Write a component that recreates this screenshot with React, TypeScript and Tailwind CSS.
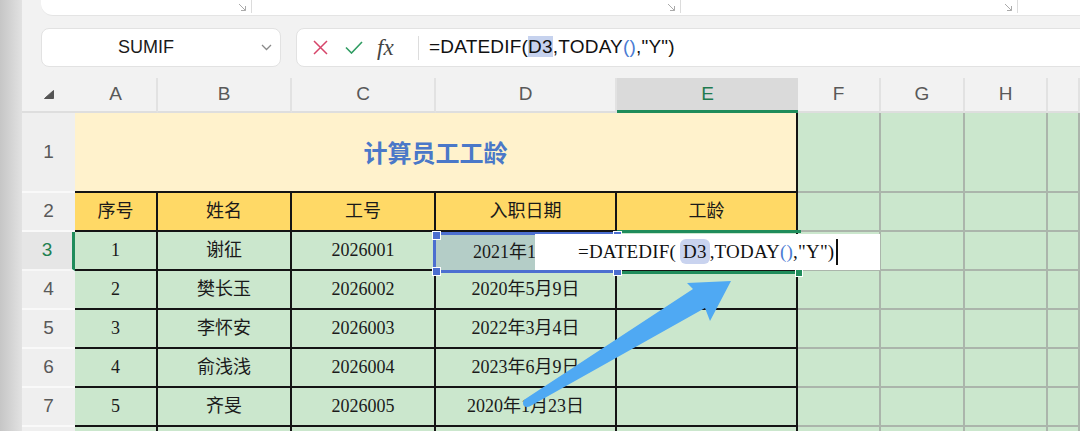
import React from "react";

const COLS =
  "grid grid-cols-[53px_83px_134px_144px_181px_181px_83px_84px_83px_1fr]";

const SERIF = "font-['Liberation_Serif','Noto_Sans_CJK_SC',serif]";

function RowHead({ n, active }: { n: string; active?: boolean }) {
  return (
    <div
      className={
        active
          ? "flex items-center justify-center bg-[#e6e6e6] border-b-2 border-[#f7f7f7] border-r-[3px] border-r-[#1f8c5b] text-[#1f8050] text-[19px] font-['Liberation_Sans',sans-serif]"
          : "flex items-center justify-center bg-[#efefef] border-b-2 border-[#f9f9f9] text-[#595959] text-[19px] font-['Liberation_Sans',sans-serif]"
      }
    >
      {n}
    </div>
  );
}

function Cell({ children, gold }: { children?: React.ReactNode; gold?: boolean }) {
  return (
    <div
      className={
        gold
          ? `flex items-center justify-center bg-[#ffd966] border-r-2 border-b-2 border-[#141414] text-[18px] text-[#1a1a1a] ${SERIF}`
          : `flex items-center justify-center bg-[#cbe7cd] border-r-2 border-b-2 border-[#141414] text-[18px] text-[#1a1a1a] ${SERIF}`
      }
    >
      {children}
    </div>
  );
}

function Empty() {
  return <div className="bg-[#cbe7cd] border-r-2 border-b-2 border-[#abb5ab]" />;
}

function ColHead({ l, active }: { l: string; active?: boolean }) {
  return (
    <div
      className={
        active
          ? "flex items-center justify-center bg-[#dadada] border-b-[3px] border-[#1f8c5b] text-[#1f7a4f] text-[19px] font-['Liberation_Sans',sans-serif]"
          : "flex items-center justify-center border-r-2 border-r-[#e2e2e2] border-b-2 border-b-[#dedede] text-[#595959] text-[19px] font-['Liberation_Sans',sans-serif]"
      }
    >
      {l}
    </div>
  );
}

function Corner() {
  return (
    <svg width="9" height="9" viewBox="0 0 9 9" className="text-[#aaaaaa]">
      <path d="M1 1 L7.5 7.5 M7.5 3 V7.5 H3" stroke="currentColor" strokeWidth="1" fill="none" />
    </svg>
  );
}

const rows = [
  ["2", "樊长玉", "2026002", "2020年5月9日"],
  ["3", "李怀安", "2026003", "2022年3月4日"],
  ["4", "俞浅浅", "2026004", "2023年6月9日"],
  ["5", "齐旻", "2026005", "2020年1月23日"],
];

export default function App() {
  return (
    <div className="relative flex w-[1080px] h-[431px] overflow-hidden bg-[#f2f2f2]">
      {/* left strip */}
      <div className="w-[22px] h-full bg-gradient-to-r from-[#c6c6c6] to-[#e2e2e2] shrink-0" />

      <div className="flex flex-col flex-1 min-w-0">
        {/* top ribbon panel */}
        <div className="h-[28px] pl-[19px] shrink-0">
          <div className="flex h-[16px] -mr-[30px] bg-white rounded-b-xl border-b border-[#e4e4e4]">
            <div className="w-[210px] flex items-start justify-end pr-[4px] pt-[3px]">
              <Corner />
            </div>
            <div className="w-px h-[13px] bg-[#dcdcdc]" />
            <div className="w-[428px] flex items-start justify-end pr-[4px] pt-[3px]">
              <Corner />
            </div>
            <div className="w-px h-[13px] bg-[#dcdcdc]" />
            <div className="w-[336px] flex items-start justify-end pr-[4px] pt-[3px]">
              <Corner />
            </div>
            <div className="w-px h-[13px] bg-[#dcdcdc]" />
          </div>
        </div>

        {/* formula bar */}
        <div className="flex h-[39px] pl-[19px] gap-[15px] shrink-0">
          <div className="flex items-center w-[240px] h-full bg-white rounded-lg border border-[#e2e2e2]">
            <div className="w-[208px] text-center text-[18px] text-[#1a1a1a] font-['Liberation_Sans',sans-serif]">
              SUMIF
            </div>
            <svg width="11" height="7" viewBox="0 0 11 7" className="ml-[11px]">
              <path d="M1 1 L5.5 5.5 L10 1" stroke="#8a8a8a" strokeWidth="1.3" fill="none" />
            </svg>
          </div>
          <div className="flex items-center flex-1 -mr-[20px] h-full bg-white rounded-lg border border-[#e2e2e2] pl-[16px]">
            <svg width="15" height="15" viewBox="0 0 15 15">
              <path d="M1 1 L14 14 M14 1 L1 14" stroke="#d6456a" strokeWidth="1.5" fill="none" />
            </svg>
            <svg width="18" height="13" viewBox="0 0 18 13" className="ml-[17px]">
              <path d="M1 6.5 L6.5 12 L17 1" stroke="#2f9c62" strokeWidth="1.6" fill="none" />
            </svg>
            <span className="ml-[14px] w-[22px] italic text-[23px] leading-none text-[#444] font-['Liberation_Serif',serif]">
              fx
            </span>
            <div className="ml-[19px] w-px h-[24px] bg-[#dddddd]" />
            <div className="ml-[10px] text-[19px] tracking-[0.2px] text-[#111] font-['Liberation_Sans',sans-serif] whitespace-nowrap">
              =DATEDIF(<span className="bg-[#c6d2ee]">D3</span>,TODAY
              <span className="text-[#4a7bd3]">()</span>,"Y")
            </div>
          </div>
        </div>

        <div className="h-[11px] shrink-0" />

        {/* sheet */}
        <div className="relative flex-1 overflow-hidden">
          {/* column header */}
          <div className={`${COLS} h-[35px]`}>
            <div className="flex items-center justify-center border-b-2 border-[#dedede]">
              <svg width="10" height="9" viewBox="0 0 10 9">
                <path d="M9.5 0.5 L9.5 8.5 L0.5 8.5 Z" fill="#555" stroke="#555" strokeLinejoin="round" />
              </svg>
            </div>
            {["A", "B", "C", "D"].map((l) => (
              <ColHead key={l} l={l} />
            ))}
            <ColHead l="E" active />
            {["F", "G", "H", ""].map((l, i) => (
              <ColHead key={i} l={l} />
            ))}
          </div>

          {/* row 1 */}
          <div className={`${COLS} h-[80px]`}>
            <RowHead n="1" />
            <div className="col-span-5 flex items-center justify-center bg-[#fff2cc] border-r-2 border-b-2 border-[#141414] text-[24px] font-bold text-[#4a78c8] font-['Noto_Sans_CJK_SC',sans-serif]">
              计算员工工龄
            </div>
            <Empty />
            <Empty />
            <Empty />
            <Empty />
          </div>

          {/* row 2 */}
          <div className={`${COLS} h-[39px]`}>
            <RowHead n="2" />
            <Cell gold>序号</Cell>
            <Cell gold>姓名</Cell>
            <Cell gold>工号</Cell>
            <Cell gold>入职日期</Cell>
            <Cell gold>工龄</Cell>
            <Empty />
            <Empty />
            <Empty />
            <Empty />
          </div>

          {/* row 3 */}
          <div className={`${COLS} h-[39px]`}>
            <RowHead n="3" active />
            <Cell>1</Cell>
            <Cell>谢征</Cell>
            <Cell>2026001</Cell>
            <Cell />
            <Cell />
            <Empty />
            <Empty />
            <Empty />
            <Empty />
          </div>

          {rows.map((r, i) => (
            <div key={i} className={`${COLS} h-[39px]`}>
              <RowHead n={String(i + 4)} />
              <Cell>{r[0]}</Cell>
              <Cell>{r[1]}</Cell>
              <Cell>{r[2]}</Cell>
              <Cell>{r[3]}</Cell>
              <Cell />
              <Empty />
              <Empty />
              <Empty />
              <Empty />
            </div>
          ))}

          {/* row 8 (only its top edge shows) */}
          <div className={`${COLS} h-[39px]`}>
            <RowHead n="" />
            <Cell />
            <Cell />
            <Cell />
            <Cell />
            <Cell />
            <Empty />
            <Empty />
            <Empty />
            <Empty />
          </div>

          {/* E3 green selection lines */}
          <div className="absolute left-[595px] top-[152px] w-[184px] h-[3px] bg-[#1f8c5b]" />
          <div className="absolute left-[595px] top-[193px] w-[181px] h-[3px] bg-[#1f8c5b]" />
          <div className="absolute left-[773px] top-[191px] w-[8px] h-[8px] bg-[#1f8c5b] border border-white" />

          {/* D3 blue selection box */}
          <div className="absolute left-[411px] top-[154px] w-[186px] h-[41px] border-[3px] border-[#4c6fd0] bg-[#b4cdc7] flex items-center pl-[37px]">
            <span className={`text-[18px] text-[#1a1a1a] ${SERIF}`}>2021年1</span>
          </div>
          <div className="absolute left-[410px] top-[153px] w-[9px] h-[9px] bg-[#4c6fd0] border border-white" />
          <div className="absolute left-[591px] top-[153px] w-[9px] h-[9px] bg-[#4c6fd0] border border-white" />
          <div className="absolute left-[410px] top-[189px] w-[9px] h-[9px] bg-[#4c6fd0] border border-white" />
          <div className="absolute left-[591px] top-[189px] w-[9px] h-[9px] bg-[#4c6fd0] border border-white" />

          {/* in-cell editor */}
          <div className="absolute left-[513px] top-[156px] w-[345px] h-[36px] bg-white flex items-center pl-[43px]">
            <span className={`text-[19px] tracking-[0.2px] text-[#111] whitespace-nowrap ${SERIF}`}>
              =DATEDIF(<span className="ml-[4px] bg-[#c9d3ef] rounded-md px-[3px] py-[2px]">D3</span>,TODAY
              <span className="text-[#4a7bd3]">()</span>,"Y")
            </span>
            <span className="ml-[2px] w-[2px] h-[26px] bg-[#111]" />
          </div>
        </div>
      </div>

      {/* blue annotation arrow */}
      <svg className="absolute inset-0 pointer-events-none" width="1080" height="431" viewBox="0 0 1080 431">
        <polygon
          points="524.5,399.5 693,289 687,283 731,281 710,321 705,308 529.5,406.5"
          fill="#4fa9f3"
        />
        <circle cx="527" cy="403" r="4" fill="#4fa9f3" />
      </svg>
    </div>
  );
}
